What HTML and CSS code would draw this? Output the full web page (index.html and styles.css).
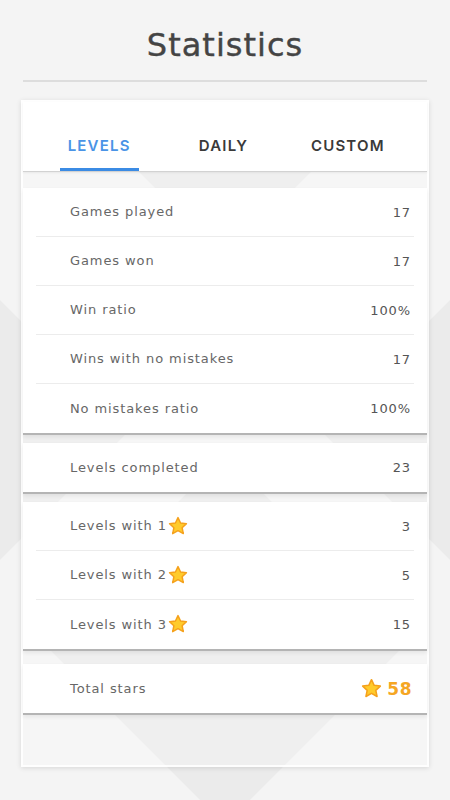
FILE: index.html
```html
<!DOCTYPE html>
<html lang="en">
<head>
<meta charset="utf-8">
<title>Statistics</title>
<link rel="stylesheet" href="styles.css">
</head>
<body>
<header class="header">
  <h1 class="title">Statistics</h1>
</header>
<hr class="rule">
<main class="card">
  <nav class="tabs">
    <div class="tab"><span class="tab-label active">LEVELS</span></div>
    <div class="tab"><span class="tab-label">DAILY</span></div>
    <div class="tab"><span class="tab-label">CUSTOM</span></div>
  </nav>

  <section class="group group-1">
    <div class="row"><span class="label">Games played</span><span class="value">17</span></div>
    <div class="row"><span class="label">Games won</span><span class="value">17</span></div>
    <div class="row"><span class="label">Win ratio</span><span class="value">100%</span></div>
    <div class="row"><span class="label">Wins with no mistakes</span><span class="value">17</span></div>
    <div class="row"><span class="label">No mistakes ratio</span><span class="value">100%</span></div>
  </section>

  <section class="group group-2">
    <div class="row"><span class="label">Levels completed</span><span class="value">23</span></div>
  </section>

  <section class="group group-3">
    <div class="row"><span class="label">Levels with 1 <svg class="star" viewBox="0 0 24 24"><polygon points="12,2.8 14.8,8.7 21.2,9.5 16.5,13.9 17.8,20.3 12,17.1 6.2,20.3 7.5,13.9 2.8,9.5 9.2,8.7"/></svg></span><span class="value">3</span></div>
    <div class="row"><span class="label">Levels with 2<svg class="star" viewBox="0 0 24 24"><polygon points="12,2.8 14.8,8.7 21.2,9.5 16.5,13.9 17.8,20.3 12,17.1 6.2,20.3 7.5,13.9 2.8,9.5 9.2,8.7"/></svg></span><span class="value">5</span></div>
    <div class="row"><span class="label">Levels with 3<svg class="star" viewBox="0 0 24 24"><polygon points="12,2.8 14.8,8.7 21.2,9.5 16.5,13.9 17.8,20.3 12,17.1 6.2,20.3 7.5,13.9 2.8,9.5 9.2,8.7"/></svg></span><span class="value">15</span></div>
  </section>

  <section class="group group-4">
    <div class="row"><span class="label">Total stars</span><span class="value total"><svg class="star star-big" viewBox="0 0 24 24"><polygon points="12,2.8 14.8,8.7 21.2,9.5 16.5,13.9 17.8,20.3 12,17.1 6.2,20.3 7.5,13.9 2.8,9.5 9.2,8.7"/></svg>58</span></div>
  </section>

  <div class="card-foot"></div>
</main>
</body>
</html>
```
FILE: styles.css
```css
* { box-sizing: border-box; }

html, body {
  margin: 0;
  padding: 0;
}

body {
  width: 450px;
  height: 800px;
  overflow: hidden;
  font-family: "DejaVu Sans", "Liberation Sans", sans-serif;
  background-color: #f4f4f4;
  background-image: url("data:image/svg+xml,%3Csvg xmlns='http://www.w3.org/2000/svg' width='450' height='800' viewBox='0 0 450 800'%3E%3Cg fill='%23ebebeb'%3E%3Cpolygon points='72,105 378,105 225,258'/%3E%3Cpolygon points='0,300 130,430 0,560 -130,430'/%3E%3Cpolygon points='450,300 580,430 450,560 320,430'/%3E%3Cpolygon points='225,455 410,640 225,825 40,640'/%3E%3C/g%3E%3C/svg%3E");
  background-repeat: no-repeat;
  background-size: 450px 800px;
}

.header {
  padding-top: 25px;
  display: flex;
  justify-content: center;
}

.title {
  margin: 0;
  font-size: 32px;
  line-height: 40px;
  font-weight: normal;
  letter-spacing: 1px;
  color: #444444;
  -webkit-text-stroke: 0.4px #444444;
}

.rule {
  margin: 15px 23px 0;
  border: 0;
  height: 2px;
  background: #dddddd;
}

.card {
  margin: 18px 21px 0;
  border: 2px solid rgba(255, 255, 255, 0.85);
  background: rgba(250, 250, 250, 0.25);
  box-shadow: 0 1px 5px rgba(0, 0, 0, 0.12);
  display: flex;
  flex-direction: column;
}

.tabs {
  background: #ffffff;
  height: 70px;
  display: grid;
  grid-template-columns: repeat(3, 1fr);
  padding: 0 17px 0 14px;
  border-bottom: 1px solid #d2d2d2;
  box-shadow: 0 1px 2px rgba(0, 0, 0, 0.06);
  margin-bottom: 16px;
}

.tab {
  display: flex;
  justify-content: center;
  align-items: flex-end;
}

.tab-label {
  font-family: "Inter", "DejaVu Sans", sans-serif;
  font-size: 15px;
  font-weight: 600;
  letter-spacing: 1.2px;
  color: #3a3a3a;
  padding: 0 8px;
  height: 35px;
  border-bottom: 3px solid transparent;
}

.tab-label.active {
  color: #4a94e6;
  border-bottom-color: #3b8be4;
}

.group {
  background: #ffffff;
  border-bottom: 2px solid #b4b4b4;
  box-shadow: 0 2px 4px rgba(0, 0, 0, 0.07);
  padding: 0 13px;
}

.group-1 { margin-bottom: 8px; }
.group-2 { margin-bottom: 8px; }
.group-3 { margin-bottom: 13px; }

.row {
  height: 49px;
  display: flex;
  align-items: center;
  justify-content: space-between;
  padding: 0 3px 0 34px;
  border-bottom: 1px solid #ececec;
  font-size: 13px;
  letter-spacing: 0.9px;
  color: #676767;
}

.row:last-child {
  border-bottom: 0;
}

.label {
  display: flex;
  align-items: center;
  margin-top: -1px;
}

.value {
  color: #555555;
  display: flex;
  align-items: center;
}

.star {
  width: 22px;
  height: 22px;
  margin-left: 0;
}

.star polygon {
  fill: #ffcb2b;
  stroke: #f5a11c;
  stroke-width: 1.6;
  stroke-linejoin: round;
}

.star-big {
  width: 23px;
  height: 23px;
  margin-right: 4px;
}

.total {
  font-size: 17px;
  font-weight: bold;
  color: #f5a623;
  letter-spacing: 0.5px;
  margin-right: -1px;
}

.card-foot {
  height: 50px;
}
```
